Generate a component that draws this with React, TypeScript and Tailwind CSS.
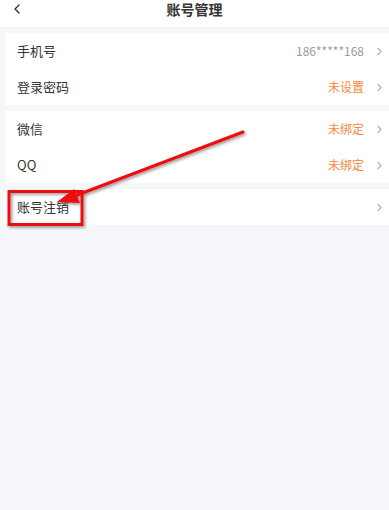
import { ChevronLeft, ChevronRight } from 'lucide-react';

type Row = {
  label: string;
  value?: string;
  tone?: 'gray' | 'orange';
};

const groups: Row[][] = [
  [
    { label: '手机号', value: '186*****168', tone: 'gray' },
    { label: '登录密码', value: '未设置', tone: 'orange' },
  ],
  [
    { label: '微信', value: '未绑定', tone: 'orange' },
    { label: 'QQ', value: '未绑定', tone: 'orange' },
  ],
  [{ label: '账号注销' }],
];

const SettingRow = ({ row }: { row: Row }) => (
  <div className="flex h-[36px] items-center pl-[12px] pr-[3px]">
    <span className="flex-1 text-[13px] text-[#333]">{row.label}</span>
    {row.value && (
      <span
        className={`text-[12px] ${row.tone === 'orange' ? 'text-[#f5883a]' : 'text-[#9a9a9a]'}`}
      >
        {row.value}
      </span>
    )}
    <ChevronRight className="ml-[9px] h-[13px] w-[13px] text-[#b0b0b0]" strokeWidth={2} />
  </div>
);

export default function App() {
  return (
    <div
      className="relative h-[510px] w-[389px] overflow-hidden bg-[#f6f7fb]"
      style={{ fontFamily: '"Noto Sans CJK SC", "Noto Sans", sans-serif' }}
    >
      {/* header */}
      <div className="relative flex h-[27px] items-center justify-center bg-white">
        <ChevronLeft className="absolute left-[9px] top-[1px] h-[16px] w-[16px] text-[#333]" strokeWidth={2} />
        <span className="-mt-[9px] text-[14px] font-semibold text-[#333]">账号管理</span>
      </div>

      {/* groups */}
      <div className="flex flex-col gap-[6px] pt-[6px] pl-[5px]">
        {groups.map((g, i) => (
          <div key={i} className="bg-white">
            {g.map((r) => (
              <SettingRow key={r.label} row={r} />
            ))}
          </div>
        ))}
      </div>

      {/* annotation overlay */}
      <svg
        className="pointer-events-none absolute left-0 top-0"
        width={389}
        height={510}
        viewBox="0 0 389 510"
      >
        <defs>
          <filter id="sh" x="-20%" y="-20%" width="140%" height="140%">
            <feDropShadow dx="1.5" dy="1.5" stdDeviation="1.5" floodColor="#000" floodOpacity="0.45" />
          </filter>
        </defs>
        <g filter="url(#sh)">
          <rect x={9} y={191.5} width={73} height={33} fill="none" stroke="#ee1111" strokeWidth={3} />
          <line x1={243} y1={132} x2={72} y2={197} stroke="#ee1111" strokeWidth={3} strokeLinecap="round" />
          <polygon points="57,202 74,189 80,203" fill="#ee1111" />
        </g>
      </svg>
    </div>
  );
}
